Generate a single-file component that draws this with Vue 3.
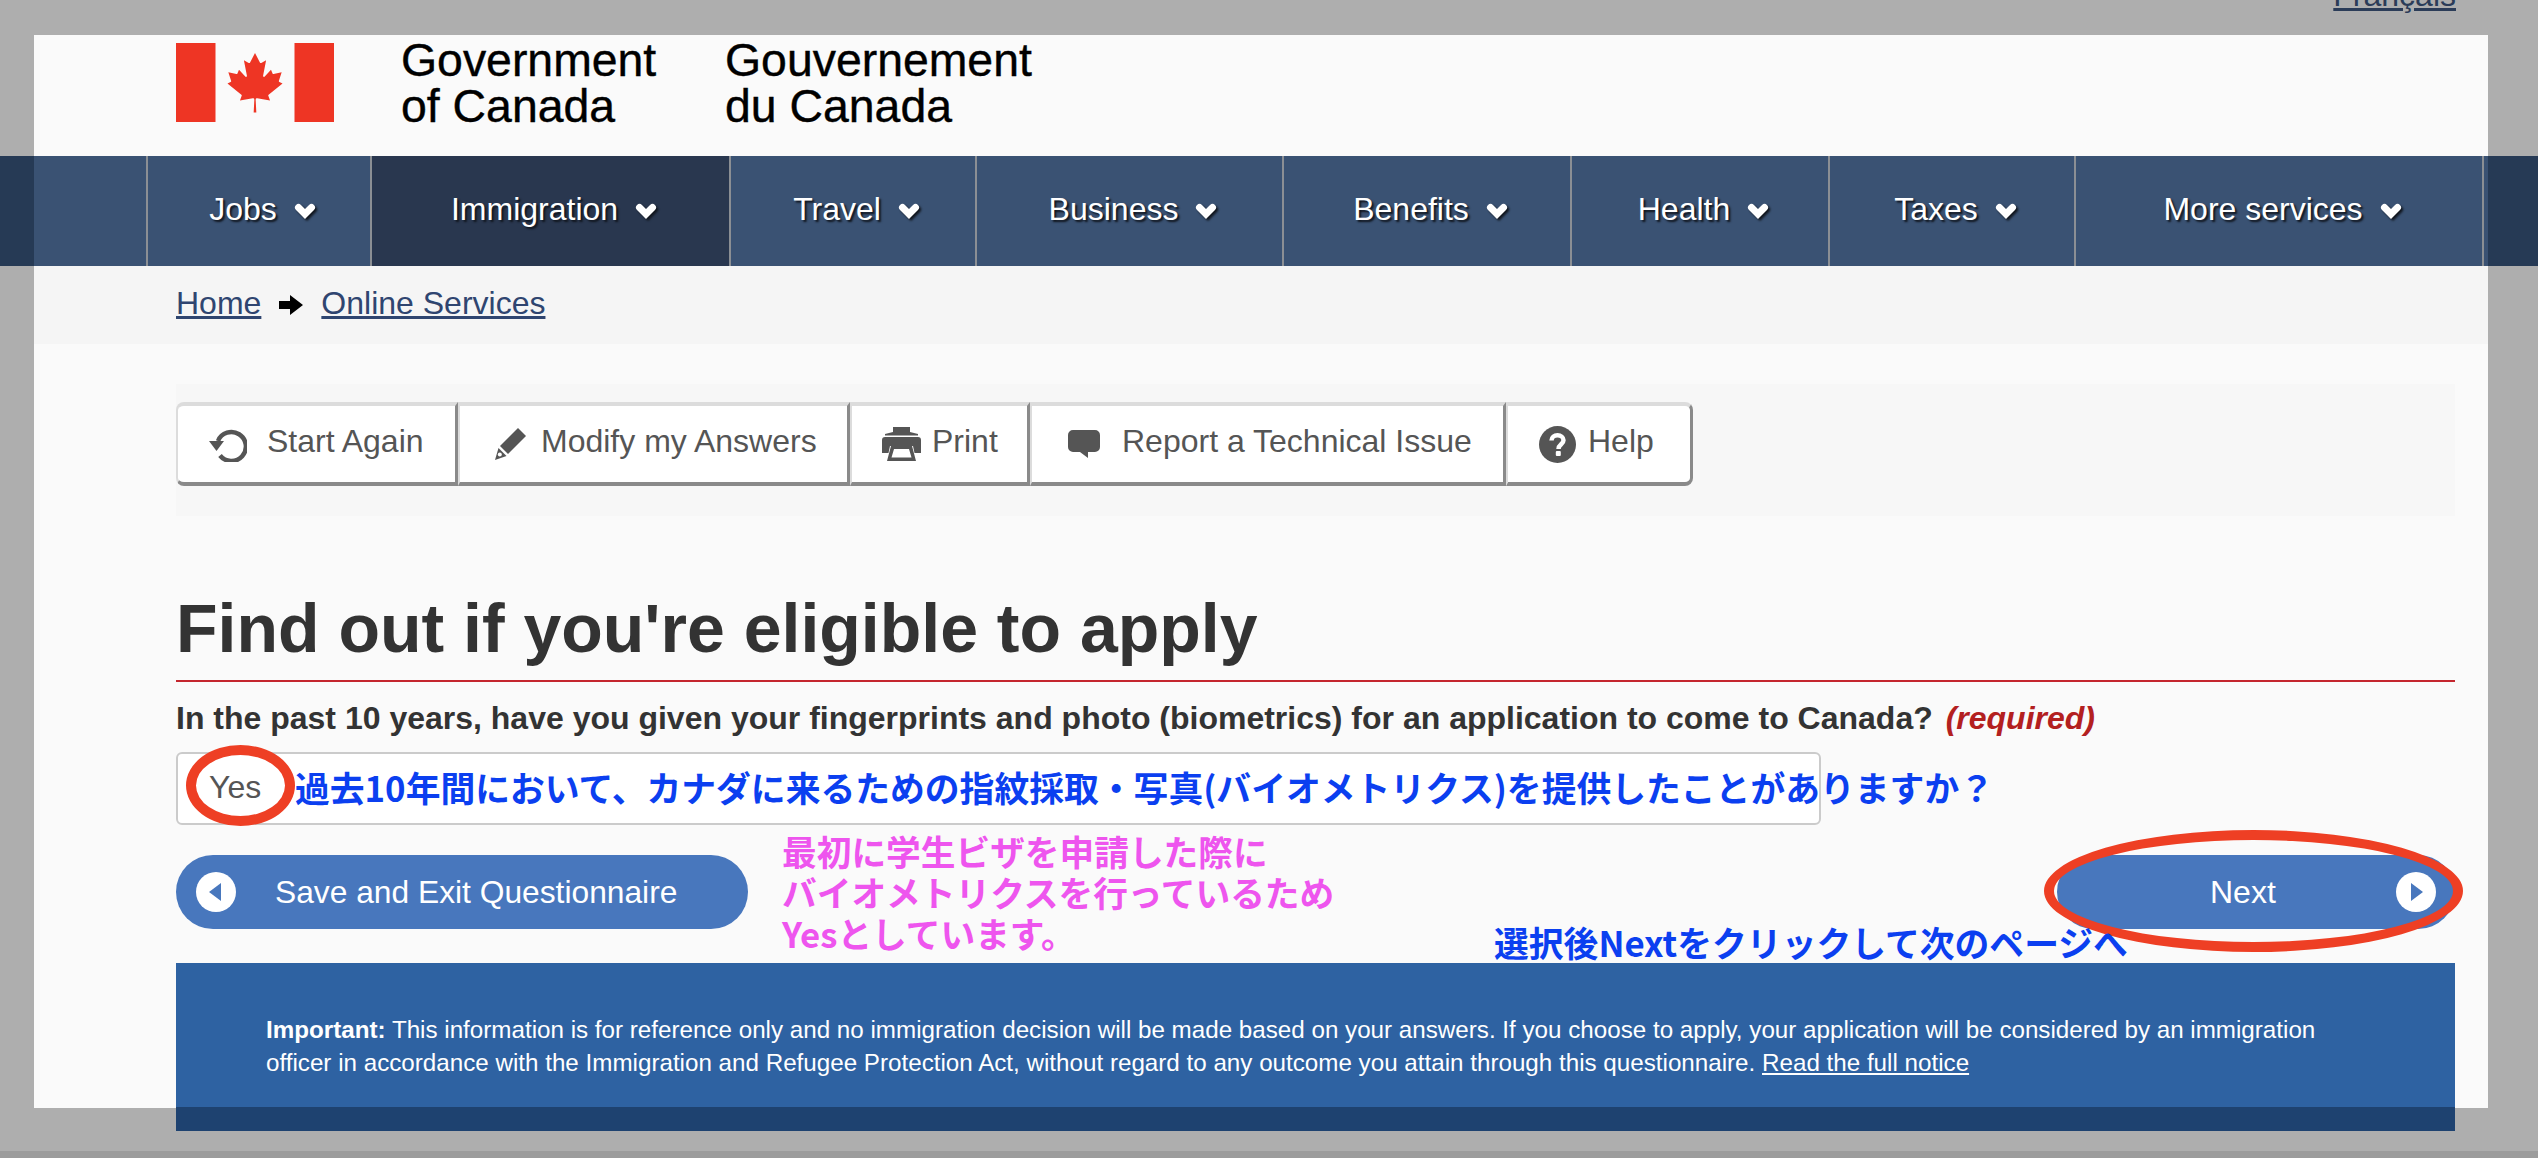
<script setup>
const navItems = [
  { label: 'Jobs', cls: '' },
  { label: 'Immigration', cls: 'active' },
  { label: 'Travel', cls: '' },
  { label: 'Business', cls: '' },
  { label: 'Benefits', cls: '' },
  { label: 'Health', cls: '' },
  { label: 'Taxes', cls: '' },
  { label: 'More services', cls: '' }
]
</script>

<template>
  <div class="page">
    <div class="top"><a class="lang">Français</a></div>
    <div class="panel">
      <header class="brand">
        <svg class="flag" viewBox="0 0 9600 4800" aria-label="Canada flag">
          <path fill="#ee3524" d="M0 0h2400v4800H0zM7200 0h2400v4800H7200z" />
          <path fill="#ee3524" d="M4890 4430l-45-863a95 95 0 0 1 111-98l859 151-116-320a65 65 0 0 1 20-73l941-762-212-99a65 65 0 0 1-34-79l186-572-542 115a65 65 0 0 1-73-38l-105-247-423 454a65 65 0 0 1-111-57l204-1052-327 189a65 65 0 0 1-91-27l-332-652-332 652a65 65 0 0 1-91 27l-327-189 204 1052a65 65 0 0 1-111 57l-423-454-105 247a65 65 0 0 1-73 38l-542-115 186 572a65 65 0 0 1-34 79l-212 99 941 762a65 65 0 0 1 20 73l-116 320 859-151a95 95 0 0 1 111 98l-45 863z" transform="translate(480 240) scale(.9)" />
        </svg>
        <div class="sig sig-en">Government<br />of Canada</div>
        <div class="sig sig-fr">Gouvernement<br />du Canada</div>
      </header>

      <nav class="nav">
        <div class="nav-track">
          <a v-for="item in navItems" :key="item.label" class="nav-item" :class="item.cls">
            <span>{{ item.label }}</span>
            <svg class="chev" viewBox="0 0 22 16"><path d="M4.500 4.500 11 11l6.500-6.500" fill="none" stroke="#fff" stroke-width="7" stroke-linecap="round" /></svg>
          </a>
        </div>
      </nav>

      <div class="crumbs">
        <a>Home</a>
        <svg class="crumb-arrow" viewBox="0 0 24 20"><path d="M0 6h11V0l13 10-13 10v-6H0z" fill="#000" /></svg>
        <a>Online Services</a>
      </div>

      <main class="content">
        <div class="well">
          <div class="tools">
            <a class="tool t1">
              <svg viewBox="0 0 38 36" class="ic i-again"><path d="M9 15A14.500 14.500 0 1 1 11 29.500" fill="none" stroke="#555" stroke-width="4.500" /><path d="M0 15h15L7.500 25z" fill="#555" /></svg>
              <span>Start Again</span>
            </a>
            <a class="tool t2">
              <svg viewBox="0 0 31 32" class="ic i-pencil"><path d="M23 0l8 8L13 26l-8-8z" fill="#555" /><path d="M3.500 20l8 8L0 32z" fill="#555" /><circle cx="4.800" cy="26.500" r="2" fill="#fff" /></svg>
              <span>Modify my Answers</span>
            </a>
            <a class="tool t3">
              <svg viewBox="0 0 39 34" class="ic i-print"><path fill="#555" d="M11 0h17v5l8 2v1.500H3V7l8-2z" /><path fill="#555" d="M3 10h33a3 3 0 0 1 3 3v13h-6.500L31 19H8l-1.500 7H0V13a3 3 0 0 1 3-3z" /><path fill="#555" fill-rule="evenodd" d="M9 19h21l4 15H5zM12 22l-2.500 8.500h20L27 22z" /></svg>
              <span>Print</span>
            </a>
            <a class="tool t4">
              <svg viewBox="0 0 32 28" class="ic i-bubble"><path fill="#555" d="M5 0h22a5 5 0 0 1 5 5v12a5 5 0 0 1-5 5h-7v6l-8-6H5a5 5 0 0 1-5-5V5a5 5 0 0 1 5-5z" /></svg>
              <span>Report a Technical Issue</span>
            </a>
            <a class="tool t5">
              <svg viewBox="0 0 37 37" class="ic i-help"><circle cx="18.500" cy="18.500" r="18.500" fill="#555" /><path d="M12.500 14.500c0-3.300 2.700-5.200 6-5.200s6 2 6 5c0 4-5 4-5 8.700" fill="none" stroke="#fff" stroke-width="4.500" /><rect x="16.800" y="25" width="5" height="5" rx="1" fill="#fff" /></svg>
              <span>Help</span>
            </a>
          </div>
        </div>

        <h1 class="title">Find out if you're eligible to apply</h1>

        <p class="question">In the past 10 years, have you given your fingerprints and photo (biometrics) for an application to come to Canada? <em>(required)</em></p>

        <div class="answer">
          <span class="yes">Yes</span>
          <span class="note-blue">過去10年間において、カナダに来るための指紋採取・写真(バイオメトリクス)を提供したことがありますか？</span>
          <span class="ring ring-yes"></span>
        </div>

        <div class="actions">
          <a class="pill pill-save">
            <svg viewBox="0 0 40 40" class="pill-ic"><circle cx="20" cy="20" r="20" fill="#fff" /><path d="M25 11v18L13 20z" fill="#4877bd" /></svg>
            <span>Save and Exit Questionnaire</span>
          </a>
          <p class="note-pink">最初に学生ビザを申請した際に<br />バイオメトリクスを行っているため<br />Yesとしています。</p>
          <a class="pill pill-next">
            <span>Next</span>
            <svg viewBox="0 0 40 40" class="pill-ic"><circle cx="20" cy="20" r="20" fill="#fff" /><path d="M15 11v18l12-9z" fill="#4877bd" /></svg>
          </a>
          <span class="ring ring-next"></span>
          <span class="note-next">選択後Nextをクリックして次のページへ</span>
        </div>

        <section class="notice">
          <p><strong>Important:</strong> This information is for reference only and no immigration decision will be made based on your answers. If you choose to apply, your application will be considered by an immigration officer in accordance with the Immigration and Refugee Protection Act, without regard to any outcome you attain through this questionnaire. <a>Read the full notice</a></p>
        </section>
      </main>
    </div>
    <div class="strip"></div>
  </div>
</template>

<style scoped>
.page {
  width: 2538px;
  height: 1158px;
  overflow: hidden;
  display: flex;
  flex-direction: column;
  background: #aeaeae;
  font-family: "Liberation Sans", Arial, sans-serif;
  color: #333;
}
.top {
  height: 35px;
  flex: none;
  display: flex;
  justify-content: flex-end;
  padding-right: 82px;
}
.lang {
  font-size: 32px;
  line-height: 36px;
  height: 36px;
  margin-top: -23px;
  color: #2b3c58;
  text-decoration: underline;
}
.panel {
  flex: none;
  height: 1073px;
  margin: 0 50px 0 34px;
  background: #fafafa;
  display: flex;
  flex-direction: column;
}
.brand {
  height: 121px;
  flex: none;
  display: flex;
  padding: 8px 0 0 142px;
  box-sizing: border-box;
}
.flag {
  width: 158px;
  height: 79px;
  flex: none;
}
.sig {
  font-size: 46.400px;
  line-height: 46px;
  color: #000;
  margin-top: -6px;
  -webkit-text-stroke: 0.4px #000;
}
.sig-en {
  margin-left: 67px;
  width: 324px;
}
.nav {
  height: 110px;
  flex: none;
  margin: 0 -50px 0 -34px;
  background: #263a55;
  padding: 0 50px 0 34px;
}
.nav-track {
  height: 100%;
  background: #3a5273;
  padding-left: 112px;
  display: grid;
  grid-template-columns: 224px 359px 246px 307px 288px 258px 246px 410px;
}
.nav-item {
  display: flex;
  align-items: center;
  justify-content: center;
  gap: 17px;
  padding: 0 0 4px 7px;
  border-left: 2px solid #8b8f94;
  color: #fff;
  font-size: 32px;
  text-shadow: 2px 2px 2px #10151d;
  box-sizing: border-box;
}
.nav-item:last-child {
  border-right: 2px solid #8b8f94;
}
.nav-item.active {
  background: #29374f;
}
.chev {
  width: 22px;
  height: 16px;
  margin-top: 3px;
  filter: drop-shadow(2px 2px 1px #10151d);
}
.crumbs {
  height: 78px;
  flex: none;
  background: #f5f5f5;
  padding-left: 142px;
  display: flex;
  align-items: center;
  gap: 18px;
  font-size: 32px;
  color: #2f4570;
  padding-bottom: 3px;
  box-sizing: border-box;
}
.crumbs a {
  text-decoration: underline;
}
.crumb-arrow {
  width: 24px;
  height: 20px;
  margin-top: 3px;
}
.content {
  flex: 1;
  padding: 40px 33px 0 142px;
  display: flex;
  flex-direction: column;
}
.well {
  height: 132px;
  flex: none;
  background: #f7f7f7;
  padding-top: 18px;
  box-sizing: border-box;
}
.tools {
  display: grid;
  grid-template-columns: 282px 392px 180px 476px 187px;
  width: 1517px;
  height: 84px;
}
.tool {
  display: flex;
  align-items: center;
  background: #fff;
  border-left: 2px solid #dcdcdc;
  border-right: 3px solid #8a8a8a;
  border-top: 4px solid #dcdcdc;
  border-bottom: 4px solid #8a8a8a;
  box-sizing: border-box;
  font-size: 32px;
  color: #555;
}
.tool span {
  margin-bottom: 6px;
  white-space: nowrap;
}
.tool:first-child {
  border-radius: 8px 0 0 8px;
}
.tool:last-child {
  border-radius: 0 8px 8px 0;
}
.t1 { padding-left: 31px; gap: 20px; }
.t2 { padding-left: 35px; gap: 15px; }
.t3 { padding-left: 30px; gap: 11px; }
.t4 { padding-left: 36px; gap: 22px; }
.t5 { padding-left: 31px; gap: 12px; }
.ic { flex: none; }
.i-again { width: 38px; height: 36px; }
.i-pencil { width: 31px; height: 32px; }
.i-print { width: 39px; height: 34px; }
.i-bubble { width: 32px; height: 28px; }
.i-help { width: 37px; height: 37px; }
.title {
  margin: 72px 0 0;
  height: 92px;
  flex: none;
  font-size: 68px;
  line-height: 80px;
  font-weight: 700;
  color: #333;
  border-bottom: 2px solid #c4262e;
  box-sizing: content-box;
}
.question {
  margin: 18px 0 0;
  font-size: 32px;
  line-height: 36px;
  font-weight: 700;
  color: #333;
  white-space: nowrap;
}
.question em {
  color: #b3201f;
  font-style: italic;
  margin-left: 4px;
}
.answer {
  position: relative;
  margin-top: 16px;
  width: 1645px;
  height: 73px;
  flex: none;
  background: #fff;
  border: 2px solid #cbcbcb;
  border-radius: 6px;
  box-sizing: border-box;
  display: flex;
  align-items: center;
  padding-left: 31px;
}
.yes {
  font-size: 32px;
  color: #555;
  width: 86px;
  flex: none;
  margin-bottom: 2px;
}
.note-blue {
  font-family: "Noto Sans CJK JP", "Liberation Sans", sans-serif;
  font-weight: 700;
  font-size: 34.800px;
  color: #0b3ff0;
  white-space: nowrap;
  margin-bottom: 4px;
}
.ring {
  position: absolute;
  border: 10px solid #ee3f24;
  border-radius: 50%;
  box-sizing: border-box;
  pointer-events: none;
}
.ring-yes {
  left: 8px;
  top: -9px;
  width: 109px;
  height: 81px;
}
.actions {
  position: relative;
  height: 74px;
  flex: none;
  margin-top: 30px;
  display: flex;
  justify-content: space-between;
}
.pill {
  display: flex;
  align-items: center;
  height: 74px;
  border-radius: 37px;
  background: #4877bd;
  color: #fff;
  font-size: 32px;
  box-sizing: border-box;
}
.pill-save {
  width: 572px;
  padding-left: 20px;
  gap: 39px;
  font-size: 31.750px;
}
.pill-next {
  width: 398px;
  padding-left: 153px;
  gap: 120px;
}
.pill-ic {
  width: 40px;
  height: 40px;
  flex: none;
}
.note-pink {
  position: absolute;
  left: 606px;
  top: -24px;
  margin: 0;
  font-family: "Noto Sans CJK JP", "Liberation Sans", sans-serif;
  font-weight: 700;
  font-size: 34.700px;
  line-height: 41px;
  color: #ee55ee;
  white-space: nowrap;
}
.ring-next {
  left: 1868px;
  top: -25px;
  width: 419px;
  height: 122px;
}
.note-next {
  position: absolute;
  left: 1318px;
  top: 62px;
  font-family: "Noto Sans CJK JP", "Liberation Sans", sans-serif;
  font-weight: 700;
  font-size: 34.800px;
  line-height: 50px;
  color: #0b3ff0;
  white-space: nowrap;
}
.notice {
  height: 168px;
  flex: none;
  margin-top: 34px;
  background: linear-gradient(#2e62a2 144px, #1e4270 144px);
  color: #fff;
  padding: 50px 130px 0 90px;
  box-sizing: border-box;
  font-size: 24.200px;
  line-height: 33px;
}
.notice p {
  margin: 0;
}
.notice a {
  text-decoration: underline;
}
.strip {
  height: 7px;
  flex: none;
  margin-top: auto;
  background: #9c9c9c;
}
</style>
